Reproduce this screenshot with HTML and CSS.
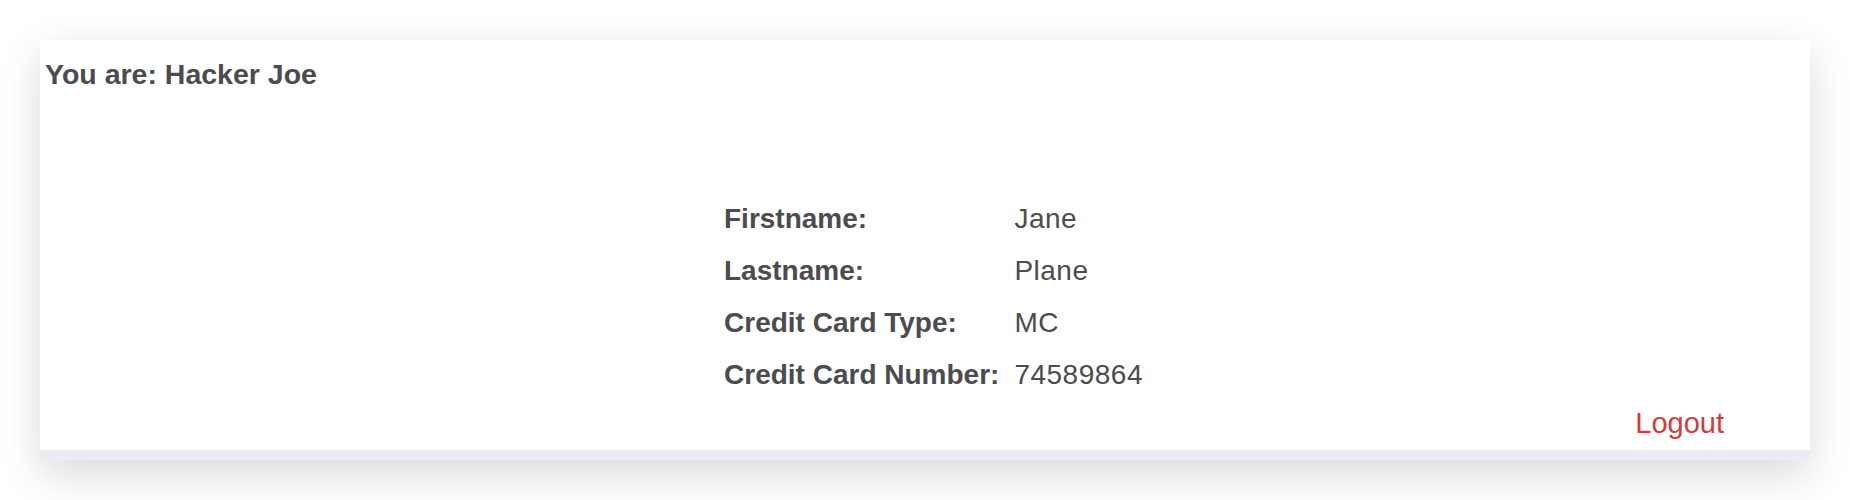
FILE: index.html
```html
<!DOCTYPE html>
<html>
<head>
<meta charset="utf-8">
<link rel="stylesheet" href="styles.css">
</head>
<body>
<div class="card">
  <div class="whoami">You are: Hacker Joe</div>
  <table class="info">
    <tr><th>Firstname:</th><td>Jane</td></tr>
    <tr><th>Lastname:</th><td>Plane</td></tr>
    <tr><th>Credit Card Type:</th><td>MC</td></tr>
    <tr><th>Credit Card Number:</th><td>74589864</td></tr>
  </table>
  <div class="actions"><a class="logout" href="#">Logout</a></div>
</div>
</body>
</html>
```

FILE: styles.css
```css
html, body {
  margin: 0;
  padding: 0;
  background: #ffffff;
}
body {
  padding: 40px;
  font-family: "Liberation Sans", Arial, sans-serif;
  color: #4b4b50;
}
.card {
  background: #ffffff;
  height: 420px;
  box-sizing: border-box;
  border-bottom: 10px solid #ececf4;
  box-shadow: 0 14px 40px rgba(0, 0, 0, 0.15);
  padding: 14px 0 0 5px;
  display: flex;
  flex-direction: column;
}
.whoami {
  font-size: 28.5px;
  line-height: 40px;
  font-weight: bold;
}
.info {
  margin: 99px auto 0;
  border-collapse: separate;
  border-spacing: 0;
  padding-left: 12px;
  font-size: 28px;
}
.info th,
.info td {
  padding: 0;
  height: 52px;
  line-height: 52px;
  vertical-align: top;
  text-align: left;
  white-space: nowrap;
}
.info th {
  font-weight: bold;
  padding-right: 15px;
}
.info td {
  font-weight: normal;
  letter-spacing: 0.5px;
}
.actions {
  display: flex;
  justify-content: flex-end;
  padding-right: 86px;
  margin-top: 2px;
}
.logout {
  font-size: 29px;
  line-height: 40px;
  color: #d13c3c;
  text-decoration: none;
}
```
